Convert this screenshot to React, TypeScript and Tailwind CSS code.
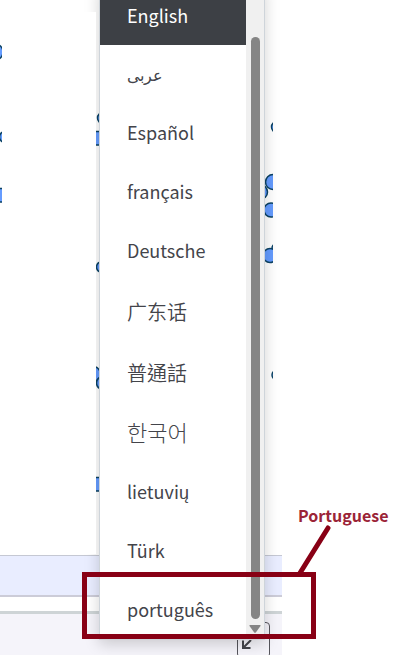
import { useState } from 'react';

const latin = 'h-[59px] text-[18px]';

const languages = [
  { code: 'en', label: 'English', style: latin },
  { code: 'ar', label: 'عربى', style: 'h-[58px] text-[16px]' },
  { code: 'es', label: 'Español', style: latin },
  { code: 'fr', label: 'français', style: latin },
  { code: 'de', label: 'Deutsche', style: latin },
  { code: 'yue', label: '广东话', style: 'h-[60px] pt-1 text-[20px] font-[350]' },
  { code: 'zh-Hant', label: '普通話', style: 'h-[61px] pt-1 text-[20px] font-[350]' },
  { code: 'ko', label: '한국어', style: 'h-[61px] text-[22px] font-light' },
  { code: 'lt', label: 'lietuvių', style: latin },
  { code: 'tr', label: 'Türk', style: latin },
  { code: 'pt', label: 'português', style: latin },
];

function MapNodes() {
  return (
    <svg width="273" height="555" className="block" aria-hidden="true">
      <g fill="#659cff" stroke="#0b4263" strokeWidth="1.5">
        {/* Left edge */}
        <g clipPath="url(#edge)">
          <circle cx="-5" cy="52" r="8" />
          <circle cx="5" cy="137" r="5.5" />
          <rect x="-6" y="188.500" width="12" height="13.500" />
        </g>
        {/* Next to the menu */}
        <g clipPath="url(#side)">
          <circle cx="103" cy="118" r="5.5" />
          <rect x="90" y="131.5" width="14" height="13.5" />
          <circle cx="102" cy="267" r="5.5" />
          <circle cx="93" cy="374" r="7.5" />
          <circle cx="103" cy="383" r="6.5" />
          <rect x="90" y="477.5" width="14" height="13.5" rx="3" />
          <circle cx="260" cy="192" r="7.5" />
          <circle cx="273" cy="182" r="7.5" />
          <circle cx="271" cy="210" r="7" />
          <circle cx="276" cy="248" r="4" />
          <circle cx="270" cy="255.5" r="7" />
          <circle cx="277" cy="127" r="5.5" />
          <circle cx="277" cy="375" r="5" />
        </g>
      </g>
      <clipPath id="edge">
        <rect width="2" height="555" />
      </clipPath>
      <clipPath id="side">
        <rect x="96" width="177" height="555" />
      </clipPath>
    </svg>
  );
}

function Workspace() {
  return (
    <div className="flex min-h-screen w-full max-w-[282px] flex-col">
      <div className="overflow-hidden">
        <MapNodes />
      </div>
      <div className="h-[42px] border-t border-b-2 border-t-[#c5c8d3] border-b-[#ccccd8] bg-[#e9edff]" />
      <div className="h-3.5" />
      <div className="flex grow justify-end border-t-3 border-[#ced4d6] bg-[#f5f4fa] pt-2 pr-3">
        <button
          type="button"
          aria-label="Collapse"
          className="flex h-9 w-[33px] items-center rounded border border-[#55555c] pt-2 pl-1"
        >
          <svg width="10" height="10" viewBox="0 0 10 10" fill="none" stroke="#43444a" strokeWidth="2">
            <path d="M9 1 1.5 8.500M1 1.500V9h7.500" />
          </svg>
        </button>
      </div>
    </div>
  );
}

function LanguageMenu() {
  const [selected, setSelected] = useState('en');

  return (
    <div className="absolute -top-3.5 left-[99px] flex w-[166px] border-x border-b border-[#ced4da] bg-white shadow-[0_4px_14px_rgba(0,0,0,0.18)]">
      <ul className="min-w-0 grow">
        {languages.map(({ code, label, style }) => (
          <li key={code}>
            <button
              type="button"
              lang={code}
              onClick={() => setSelected(code)}
              className={`block w-full pl-[27px] text-left ${style} ${
                selected === code ? 'bg-[#3d4045] text-white' : 'text-[#43444a]'
              }`}
            >
              {label}
            </button>
          </li>
        ))}
      </ul>
      {/* Scrollbar */}
      <div className="flex w-[18px] shrink-0 flex-col items-center gap-1.5 bg-[#f0f0f0] pt-[51px] pb-1.5">
        <div className="w-[9px] grow rounded-full bg-[#858585]" />
        <svg width="12" height="8" viewBox="0 0 12 8" fill="#858585" aria-hidden="true">
          <path d="M1 0h10q1 0 .5 1L7 7.3q-1 1-2 0L.5 1Q0 0 1 0z" />
        </svg>
      </div>
    </div>
  );
}

function Callout() {
  return (
    <>
      <div className="pointer-events-none absolute top-[572px] left-[82px] h-[67px] w-[234px] border-5 border-[#880015]" />
      <svg width="36" height="52" className="absolute top-[523px] left-[296px]" aria-hidden="true">
        <path d="M32 5 4 50" stroke="#880015" strokeWidth="5" strokeLinecap="round" />
      </svg>
      <p className="absolute top-[503px] left-[298px] text-[16px] leading-6 font-bold text-[#9b2437]">Portuguese</p>
    </>
  );
}

export default function App() {
  return (
    <main className="relative min-h-screen overflow-hidden bg-white font-['Noto_Sans_CJK_SC','Noto_Sans_CJK_KR',sans-serif]">
      <Workspace />
      <LanguageMenu />
      {/* The shadow does not reach the canvas area */}
      <div className="absolute top-3 left-0.5 h-[542px] w-[94px] bg-white" />
      <Callout />
    </main>
  );
}
